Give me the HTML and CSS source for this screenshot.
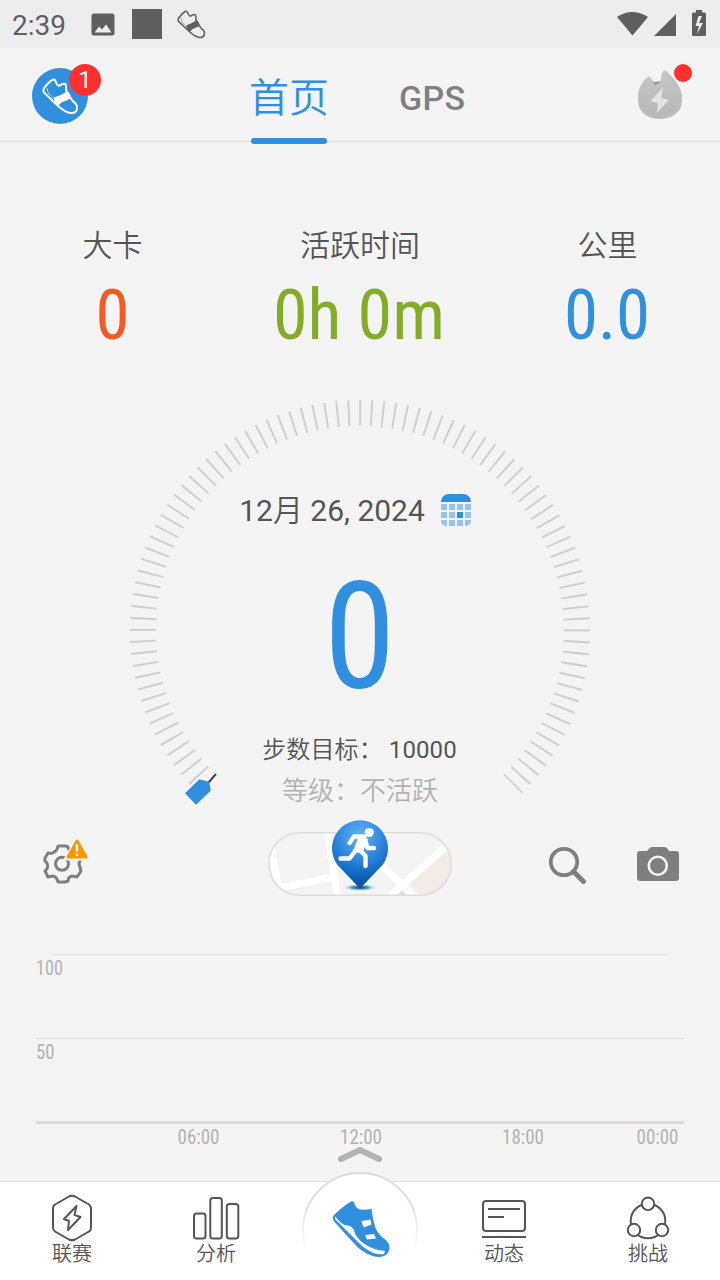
FILE: index.html
```html
<!DOCTYPE html>
<html lang="zh-CN">
<head>
<meta charset="utf-8">
<title>首页</title>
<link rel="stylesheet" href="styles.css">
</head>
<body>
<svg class="defs" width="0" height="0">
  <symbol id="shoe" viewBox="125 233 112 112">
    <path d="M131 264 Q145 245 158 238 Q164 237 166 243 Q169 254 176 257 Q190 248 195 251 Q199 254 198 271 Q205 281 211 293 Q217 304 227 311 Q233 318 230 330 Q225 341 211 339 Q193 336 169 313 L132 278 Q127 272 131 264Z" fill="none" stroke="currentColor" stroke-width="6" stroke-linejoin="round"/>
    <path d="M159 293 Q180 287 203 272 L213 290 Q211 298 197 302 Q183 305 174 318 Q160 306 163 301Z" fill="currentColor"/>
    <path d="M140 264 Q143 282 157 291" fill="none" stroke="currentColor" stroke-width="2.5" stroke-dasharray="8 2"/>
  </symbol>
</svg>
<div class="app">
  <div class="status">
    <span class="clock">2:39</span>
    <svg class="photo" width="24" height="24" viewBox="0 0 24 24"><path fill="#5f5f5f" fill-rule="evenodd" d="M3 .5h18a2.500 2.500 0 0 1 2.500 2.500v17a2.500 2.500 0 0 1-2.500 2.500H3A2.500 2.500 0 0 1 .5 20V3A2.500 2.500 0 0 1 3 .5ZM3.500 19.500h17l-5.500-8-4 5-3-3Z"/></svg>
    <span class="square"></span>
    <svg class="mini-shoe" width="29" height="29"><use href="#shoe"/></svg>
    <svg class="signals" width="90" height="28" viewBox="0 0 90 28">
      <path fill="#5f5f5f" d="M0 7Q15-3 31 7L15.500 25.500ZM37 26 59 4v22ZM75 4q0-1.500 1.500-1.500H79V0h6v2.500h2.500Q89 2.500 89 4v20.500q0 1.500-1.500 1.500h-11Q75 26 75 24.500Z"/>
      <path fill="#eee" d="m81.500 6-3 10h3.500l-2 8 6-11h-4l3-7Z"/>
    </svg>
  </div>
  <header class="top">
    <div class="avatar">
      <svg width="37" height="37"><use href="#shoe"/></svg>
      <span class="badge">1</span>
    </div>
    <div class="tab on">首页</div>
    <div class="tab gps">GPS</div>
    <div class="flame">
      <svg width="46" height="52" viewBox="0 0 46 52">
        <defs><linearGradient id="fl" x1="0" y1="0" x2="0" y2="1"><stop offset="0" stop-color="#c6c6c6"/><stop offset="1" stop-color="#b8b8b8"/></linearGradient></defs>
        <path fill="#bdbdbd" d="M1 31C1 21 6 12 10 9l14 7L26 4q3-3 6 2c8 9 13 16 13 25 0 13-11 19-22 19S1 44 1 31Z"/>
        <path fill="#999" d="m11 9 6 4 7-1-5 7Z"/>
        <path fill="url(#fl)" d="M1 28C1 19 6 12 10 8.500q2-1.500 4 .5 2 4 4 7.500 5-2 6-6.500 0-4 1.500-7 2.500-3 5.500.5c8 8 14 16 14 25 0 11-11 17.500-22 17.500S1 39 1 28Z"/>
        <path fill="#e3e3e3" d="M26.500 18 13.500 32l7 2-.5 10 12-13-8-2Z"/>
      </svg>
      <span class="dot"></span>
    </div>
  </header>

  <section class="stats">
    <div class="stat kcal"><span>大卡</span><svg width="180" height="70"><text x="72.500" y="59" textLength="34" lengthAdjust="spacingAndGlyphs">0</text></svg></div>
    <div class="stat time"><span>活跃时间</span><svg width="180" height="70"><text x="3" y="59" textLength="172" lengthAdjust="spacingAndGlyphs">0h 0m</text></svg></div>
    <div class="stat km"><span>公里</span><svg width="180" height="70"><text x="46" y="59" textLength="86" lengthAdjust="spacingAndGlyphs">0.0</text></svg></div>
  </section>

  <section class="dial">
    <svg class="ticks" width="460" height="420" viewBox="130 400 460 420">
      <path d="M199.400 775.930A217 217 0 1 1 512.720 784.160" fill="none" stroke="#d0d0d0" stroke-width="26" stroke-dasharray="2 9.362"/>
      <path d="m208.500 782.500 7.500-8.500" stroke="#444" stroke-width="2"/>
      <path d="m185 793.300 11 11.400 14.700-14-1.400-9-10-2.400Z" fill="#318fdf"/>
    </svg>
    <div class="date"><span class="day">12<span class="cjk">月</span> 26, 2024</span>
      <svg width="30" height="32" viewBox="0 0 30 32">
        <path fill="#318fdf" d="M0 8a8 8 0 0 1 8-8h14a8 8 0 0 1 8 8Z"/>
        <path fill="#96c4ed" d="M0 10h6v6H0ZM8 10h6v6H8ZM16 10h6v6h-6ZM24 10h6v6h-6ZM0 18h6v6H0ZM8 18h6v6H8ZM24 18h6v6h-6ZM0 26h6v6H5a5 5 0 0 1-5-5ZM8 26h6v6H8ZM16 26h6v6h-6ZM24 26h6v1a5 5 0 0 1-5 5h-1Z"/>
        <path fill="#318fdf" d="M16 18h6v6h-6Z"/>
      </svg>
    </div>
    <svg class="steps" width="100" height="180"><text x="14" y="137.500" textLength="71.500" lengthAdjust="spacingAndGlyphs">0</text></svg>
    <div class="goal"><span class="cjk">步数目标：</span> 10000</div>
    <div class="level">等级：不活跃</div>
  </section>

  <section class="tools">
    <svg class="gear" width="50" height="50" viewBox="40 837 50 50">
      <path d="M58 846h8q2 0 3 4l4 2 4-1 4 6-1 4q-2 3 0 6l1 4-4 6q-3-1-5-1-4 1-4 5l-3 1h-7q-1-5-5-6l-5 1-3-6q4-3 2-8-3-2-2-5l3-5q5 1 6-1 3-1 4-6Z" fill="none" stroke="#7f7f7f" stroke-width="3" stroke-linejoin="round"/>
      <circle cx="62" cy="863.800" r="6.500" fill="none" stroke="#7f7f7f" stroke-width="3"/>
      <path d="m77 841 9 16.500H68Z" fill="#f4f4f4" stroke="#f4f4f4" stroke-width="6"/>
      <path d="m77 841 9 16H68Z" fill="#ff9500" stroke="#ff9500" stroke-width="3" stroke-linejoin="round"/>
      <path d="M77 844v7.500M77 853.500v2.500" stroke="#fff" stroke-width="2.400"/>
    </svg>
    <svg class="map" width="186" height="80" viewBox="267 818 186 80">
      <defs>
        <clipPath id="pill"><rect x="269" y="833" width="182" height="62" rx="31"/></clipPath>
        <radialGradient id="pin" gradientUnits="userSpaceOnUse" cx="360" cy="836" r="50"><stop offset="0" stop-color="#64b4f4"/><stop offset=".35" stop-color="#3b91e4"/><stop offset=".7" stop-color="#176fc9"/><stop offset="1" stop-color="#07509a"/></radialGradient>
        <radialGradient id="sh"><stop offset="0" stop-color="#174c78"/><stop offset=".5" stop-color="#4c94c7"/><stop offset="1" stop-color="#bcdff2" stop-opacity="0"/></radialGradient>
      </defs>
      <g clip-path="url(#pill)">
        <path fill="#f4f4f4" d="M267 830h186v68H267Z"/>
        <path fill="#f3ebe5" d="m409 883 44-37v52h-27Z"/>
        <path fill="#d9e6c8" d="m395 895 6-6 6 6Z"/>
        <path fill="none" stroke="#e9e9e9" stroke-width="9" d="M271 847 279 888 333 877M327 830 338 898M376 860 418 900M386 899 449 844M380 841 390 830"/>
        <path fill="none" stroke="#fff" stroke-width="8" d="M271 847 279 888 333 877M327 830 338 898M376 860 418 900M386 899 449 844M380 841 390 830"/>
      </g>
      <rect x="268.800" y="832.800" width="182.400" height="62.400" rx="31.200" fill="none" stroke="#dedede" stroke-width="1.600"/>
      <ellipse cx="360" cy="887.500" rx="16" ry="3.500" fill="url(#sh)"/>
      <path fill="url(#pin)" d="M360 888.500 337.500 865A28 28 0 1 1 382.500 865Z"/>
      <circle cx="369.200" cy="832.500" r="4.600" fill="#fff"/>
      <path fill="none" stroke="#fff" stroke-linecap="round" stroke-linejoin="round" stroke-width="4.400" d="m349.500 843 4.500-6.500H364l3.500 11.500h6.500M360 850l5.500 6v10M340.500 858.500h9L356 850"/>
      <path fill="#fff" d="m359 836 9 3-6 15-9-3Z"/>
    </svg>
    <svg class="search" width="40" height="40" viewBox="548 846 40 40"><circle cx="564" cy="862" r="13.200" fill="none" stroke="#7f7f7f" stroke-width="3.800"/><path d="m573.500 871.500 10 10" stroke="#7f7f7f" stroke-width="5" stroke-linecap="round"/></svg>
    <svg class="camera" width="42" height="34" viewBox="0 0 42 34"><path fill="#7f7f7f" d="M3 4h7q3-4 5-4h12q3 0 5 4h7q3 0 3 3v24q0 3-3 3H3q-3 0-3-3V7q0-3 3-3Z"/><circle cx="20.800" cy="18.800" r="9" fill="none" stroke="#f4f4f4" stroke-width="2.600"/></svg>
  </section>

  <section class="chart">
    <div class="row first"><svg width="60" height="24"><text x="0" y="20" textLength="27" lengthAdjust="spacingAndGlyphs">100</text></svg></div>
    <div class="row second"><svg width="60" height="24"><text x="0" y="20" textLength="18.500" lengthAdjust="spacingAndGlyphs">50</text></svg></div>
    <svg class="axis" width="648" height="50">
      <text x="141.500" y="20" textLength="42" lengthAdjust="spacingAndGlyphs">06:00</text>
      <text x="304" y="20" textLength="42" lengthAdjust="spacingAndGlyphs">12:00</text>
      <text x="466" y="20" textLength="42" lengthAdjust="spacingAndGlyphs">18:00</text>
      <text x="600.500" y="20" textLength="42" lengthAdjust="spacingAndGlyphs">00:00</text>
      <path d="m305 35 19-9 19 9" fill="none" stroke="#b2b2b2" stroke-width="6" stroke-linecap="round"/>
    </svg>
  </section>

  <nav class="nav">
    <div class="item">
      <svg width="50" height="50" viewBox="47 1193 50 50"><path d="M69 1196.500q3-1.500 6 0l14 8q2 1.500 2 4v19q0 3-2 4l-14 8q-3 1.500-6 0l-14-8q-2-1.500-2-4v-19q0-3 2-4ZM76.500 1206 64 1219l5 2-1 9 12.500-13-6-2Z"/></svg>
      <span>联赛</span>
    </div>
    <div class="item">
      <svg width="50" height="50" viewBox="191 1193 50 50"><rect x="194" y="1213.500" width="11.500" height="25" rx="2.500"/><rect x="210.300" y="1198" width="11.500" height="40.500" rx="2.500"/><rect x="226.800" y="1204" width="11.500" height="34.500" rx="2.500"/></svg>
      <span>分析</span>
    </div>
    <div class="item mid">
      <svg class="hub" width="118" height="108" viewBox="301 1172 118 108">
        <defs><linearGradient id="ring" x1="0" y1="0" x2="0" y2="1"><stop offset="0" stop-color="#dcdcdc"/><stop offset=".3" stop-color="#e2e2e2"/><stop offset=".7" stop-color="#fff"/></linearGradient></defs>
        <circle cx="360" cy="1230" r="57" fill="#fff" stroke="url(#ring)" stroke-width="2"/>
        <path fill="#318fdf" d="M334 1215Q342 1207 350 1202q2-1.500 4 0 1 6 6 7.500 5 .5 11.500-.5 1 10 4 19 3 7 8.500 10.500 6 5 5.500 10-1.500 8-10 8.500c-8 0-17-5-23-11l-22-24q-3-4-.5-7Z"/>
        <path fill="#fff" d="M335.500 1216.500q3 5 9 8.500 6 0 9 4 2 9 11 15 9 6 20.500 7l-1 3c-9 1.500-18-4-24-10l-23-23q-3-2-1.500-4.500Z"/>
        <path fill="#fff" d="m361.500 1221 9-1.500 1 5-8 3ZM365 1235l9-1 2 4.500-9 1Z"/>
      </svg>
    </div>
    <div class="item">
      <svg width="50" height="50" viewBox="479 1193 50 50"><rect x="483" y="1201" width="42" height="30" rx="3"/><path d="M488 1209h32M488 1217h16M482 1237h44"/></svg>
      <span>动态</span>
    </div>
    <div class="item">
      <svg width="50" height="50" viewBox="623 1193 50 50"><circle cx="648" cy="1221" r="17.300"/><g fill="#fff"><circle cx="648" cy="1203.800" r="6.200"/><circle cx="634" cy="1230" r="6.200"/><circle cx="662" cy="1230" r="6.200"/></g></svg>
      <span>挑战</span>
    </div>
  </nav>
</div>
</body>
</html>
```
FILE: styles.css
```css
* { box-sizing: border-box; }
body { margin: 0; background: #f4f4f4; font-family: Roboto, "Noto Sans CJK SC", sans-serif; color: #555; }
svg { display: block; flex: none; }
.defs { position: absolute; }
.app { width: 720px; height: 1280px; display: flex; flex-direction: column; overflow: hidden; }
.cjk, .on, .stat, .level, .item { font-family: "Noto Sans CJK SC DemiLight", "Noto Sans CJK SC", sans-serif; font-weight: 350; }

.status { height: 48px; flex: none; background: #ededed; display: flex; align-items: center; padding: 0 12px; color: #5f5f5f; }
.clock { font-size: 28px; line-height: 48px; width: 79px; padding-top: 3px; }
.square { width: 30px; height: 30px; background: #5f5f5f; margin: 0 14.500px 0 17px; }
.photo { margin-top: 1px; }
.signals { margin-left: auto; margin-right: 1px; overflow: visible; }

.top { height: 94px; flex: none; border-bottom: 1px solid #dcdcdc; display: flex; align-items: center; padding: 0 34px 0 32px; }
.avatar { position: relative; width: 56px; height: 56px; border-radius: 50%; background: #318fdf; color: #fff; display: flex; align-items: center; justify-content: center; margin-top: 3px; }
.badge { position: absolute; left: 37px; top: -4px; width: 32px; height: 32px; border-radius: 50%; background: #ff3030; font-size: 24px; line-height: 33px; text-align: center; }
.tab { position: relative; height: 94px; line-height: 95px; font-size: 40px; }
.on { color: #318fdf; margin-left: 161px; width: 80px; }
.on::after { content: ""; position: absolute; left: 2px; top: 90px; width: 76px; height: 6px; border-radius: 3px; background: #318fdf; }
.gps { margin-left: 70px; font-size: 34px; font-weight: 500; color: #808080; line-height: 100px; letter-spacing: .3px; }
.flame { position: relative; margin-left: auto; margin-right: 3px; }
.dot { position: absolute; left: 37px; top: -5px; width: 18px; height: 18px; border-radius: 50%; background: #ff3030; }

.stats { display: grid; grid-template-columns: 225px 270px 225px; height: 258px; padding-top: 81px; flex: none; }
.stat { display: flex; flex-direction: column; align-items: center; font-size: 30px; line-height: 40px; }
.stat svg { margin-top: 17px; overflow: visible; }
.stat text { font: 400 70px "Roboto Condensed", Roboto, sans-serif; }
.kcal text { fill: #f55a23; }
.time text { fill: #83ad27; }
.km text { fill: #318fdf; }

.dial { position: relative; width: 460px; height: 420px; margin: 0 auto; flex: none; display: flex; flex-direction: column; align-items: center; }
.ticks { position: absolute; left: 0; top: 0; }
.date { display: flex; align-items: center; gap: 16px; font-size: 30px; line-height: 40px; height: 40px; margin-top: 90px; margin-left: -10px; }
.day { padding-bottom: 2px; }
.steps { margin-top: 20px; overflow: visible; }
.steps text { font: 400 148px "Roboto Condensed", Roboto, sans-serif; fill: #318fdf; }
.goal { margin-top: 2px; margin-left: -1px; font-size: 24px; line-height: 32px; height: 32px; letter-spacing: .1px; white-space: pre; }
.level { margin-top: 5px; font-size: 26px; line-height: 40px; color: #b2b2b2; height: 50px; }

.tools { height: 134px; flex: none; display: flex; align-items: flex-start; padding: 0 41px 0 40px; }
.gear { margin-top: 17px; }
.map { margin-top: -2px; margin-left: 177px; }
.search { margin-top: 26px; margin-left: 95px; }
.camera { margin-top: 27px; margin-left: auto; }

.chart { margin: 0 36px; height: 227px; flex: none; }
.row { height: 84px; border-top: 1px solid #dfdfdf; }
.second { height: 83px; }
.first { border-image: linear-gradient(90deg, transparent 2%, #e2e2e2 3%, #e2e2e2 97%, transparent 98%) 1; }
.chart text { font: 400 20px "Roboto Condensed", Roboto, sans-serif; fill: #b2b2b2; }
.axis { border-top: 3px solid #dcdcdc; }

.nav { flex: none; height: 99px; background: #fff; border-top: 1px solid #dcdcdc; display: grid; grid-template-columns: repeat(5, 144px); position: relative; }
.item { display: flex; flex-direction: column; align-items: center; padding-top: 11px; }
.item > svg:not(.hub) { fill: none; stroke: #555; stroke-width: 2; stroke-linejoin: round; }
.item span { font-size: 20px; line-height: 24px; margin-top: -2px; }
.mid { padding: 0; }
.hub { margin-top: -10px; }
```
